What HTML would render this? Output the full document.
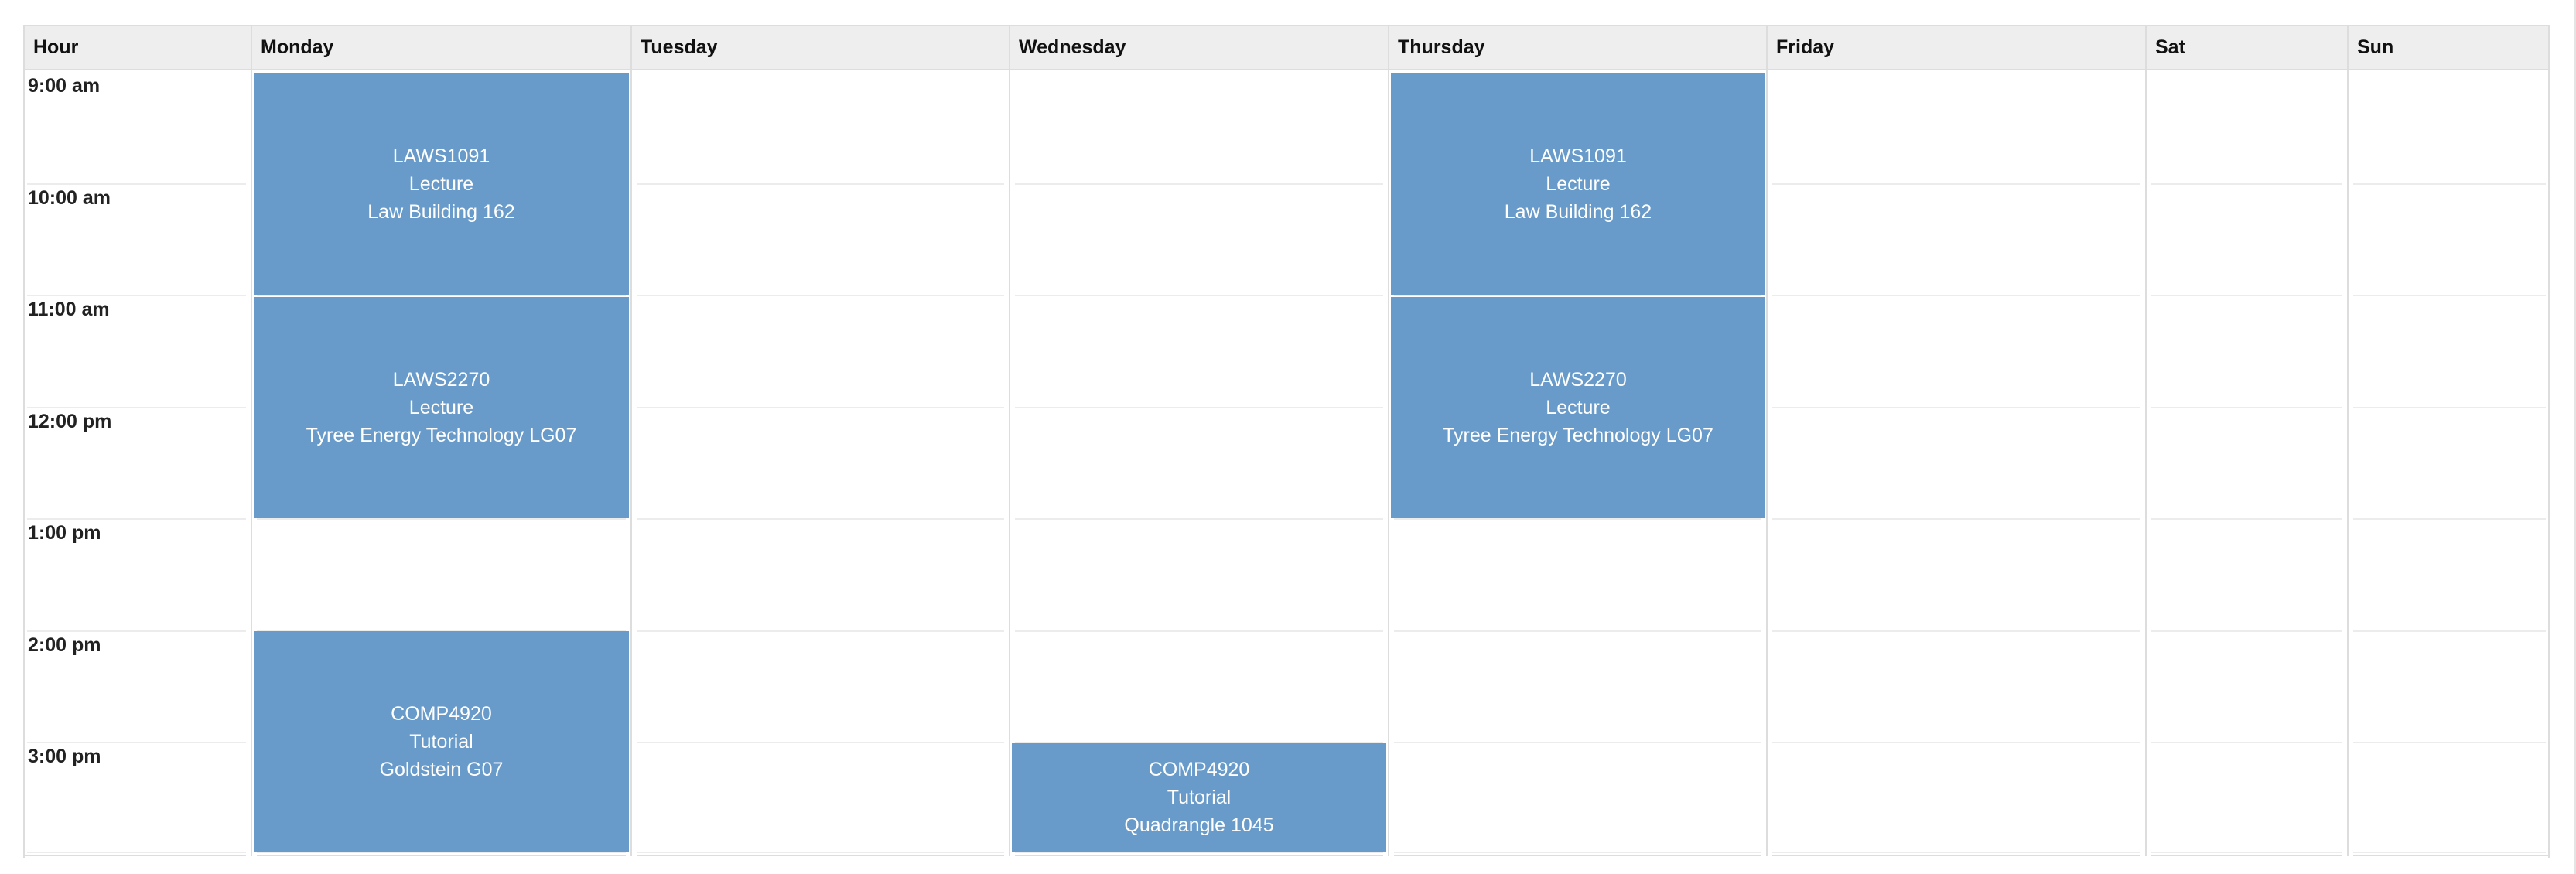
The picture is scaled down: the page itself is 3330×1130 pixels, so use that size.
<!DOCTYPE html>
<html><head><meta charset="utf-8">
<style>
html,body{margin:0;padding:0;background:#fff;width:3330px;height:1130px;overflow:hidden;position:relative;font-family:"Liberation Sans",Arial,sans-serif;}
.a{position:absolute;}
.hdr{position:absolute;left:30px;top:32px;width:3266px;height:59px;background:#eee;border-top:2px solid #ddd;box-sizing:border-box;}
.vl{position:absolute;width:2px;background:#ddd;top:32px;height:1077px;}
.hl{position:absolute;height:2px;background:#ddd;}
.rl{position:absolute;height:2px;background:#ececec;}
.ht{position:absolute;top:32px;height:59px;line-height:59px;font-weight:bold;font-size:25px;color:#111;}
.tm{position:absolute;font-weight:bold;font-size:25px;color:#222;left:36px;}
.ev{position:absolute;background:#689bc9;color:#fff;font-size:25px;line-height:36px;text-align:center;display:flex;align-items:center;justify-content:center;}
.sb{position:absolute;right:0;top:0;width:3px;height:1130px;background:#e4e4e4;}
</style></head><body>
<div class="hdr"></div>
<div class="hl" style="left:30px;top:89px;width:3266px;"></div>
<div class="hl" style="left:30px;top:1105px;width:3266px;"></div>
<div class="vl" style="left:30px"></div>
<div class="vl" style="left:324px"></div>
<div class="vl" style="left:815px"></div>
<div class="vl" style="left:1304px"></div>
<div class="vl" style="left:1794px"></div>
<div class="vl" style="left:2283px"></div>
<div class="vl" style="left:2773px"></div>
<div class="vl" style="left:3034px"></div>
<div class="vl" style="left:3294px"></div>

<div class="ht" style="left:43px">Hour</div>
<div class="ht" style="left:337px">Monday</div>
<div class="ht" style="left:828px">Tuesday</div>
<div class="ht" style="left:1317px">Wednesday</div>
<div class="ht" style="left:1807px">Thursday</div>
<div class="ht" style="left:2296px">Friday</div>
<div class="ht" style="left:2786px">Sat</div>
<div class="ht" style="left:3047px">Sun</div>

<!-- row lines -->
<div class="rl" style="left:35px;top:237px;width:3256px;"></div>
<div class="rl" style="left:35px;top:381px;width:3256px;"></div>
<div class="rl" style="left:35px;top:526px;width:3256px;"></div>
<div class="rl" style="left:35px;top:670px;width:3256px;"></div>
<div class="rl" style="left:35px;top:815px;width:3256px;"></div>
<div class="rl" style="left:35px;top:959px;width:3256px;"></div>
<div class="rl" style="left:35px;top:1101px;width:3256px;"></div>
<!-- column gaps in row lines -->
<div class="a" style="left:318px;top:230px;width:14px;height:880px;background:#fff"></div>
<div class="a" style="left:809px;top:230px;width:14px;height:880px;background:#fff"></div>
<div class="a" style="left:1298px;top:230px;width:14px;height:880px;background:#fff"></div>
<div class="a" style="left:1788px;top:230px;width:14px;height:880px;background:#fff"></div>
<div class="a" style="left:2277px;top:230px;width:14px;height:880px;background:#fff"></div>
<div class="a" style="left:2767px;top:230px;width:14px;height:880px;background:#fff"></div>
<div class="a" style="left:3028px;top:230px;width:14px;height:880px;background:#fff"></div>
<div class="vl" style="left:324px;top:91px;height:1016px"></div>
<div class="vl" style="left:815px;top:91px;height:1016px"></div>
<div class="vl" style="left:1304px;top:91px;height:1016px"></div>
<div class="vl" style="left:1794px;top:91px;height:1016px"></div>
<div class="vl" style="left:2283px;top:91px;height:1016px"></div>
<div class="vl" style="left:2773px;top:91px;height:1016px"></div>
<div class="vl" style="left:3034px;top:91px;height:1016px"></div>

<div class="tm" style="top:97px">9:00 am</div>
<div class="tm" style="top:242px">10:00 am</div>
<div class="tm" style="top:386px">11:00 am</div>
<div class="tm" style="top:531px">12:00 pm</div>
<div class="tm" style="top:675px">1:00 pm</div>
<div class="tm" style="top:820px">2:00 pm</div>
<div class="tm" style="top:964px">3:00 pm</div>

<div class="ev" style="left:328px;top:94px;width:485px;height:288px;">LAWS1091<br>Lecture<br>Law Building 162</div>
<div class="ev" style="left:328px;top:384px;width:485px;height:286px;">LAWS2270<br>Lecture<br>Tyree Energy Technology LG07</div>
<div class="ev" style="left:328px;top:816px;width:485px;height:286px;">COMP4920<br>Tutorial<br>Goldstein G07</div>
<div class="ev" style="left:1798px;top:94px;width:484px;height:288px;">LAWS1091<br>Lecture<br>Law Building 162</div>
<div class="ev" style="left:1798px;top:384px;width:484px;height:286px;">LAWS2270<br>Lecture<br>Tyree Energy Technology LG07</div>
<div class="ev" style="left:1308px;top:960px;width:484px;height:142px;">COMP4920<br>Tutorial<br>Quadrangle 1045</div>

<div class="sb"></div>
</body></html>
